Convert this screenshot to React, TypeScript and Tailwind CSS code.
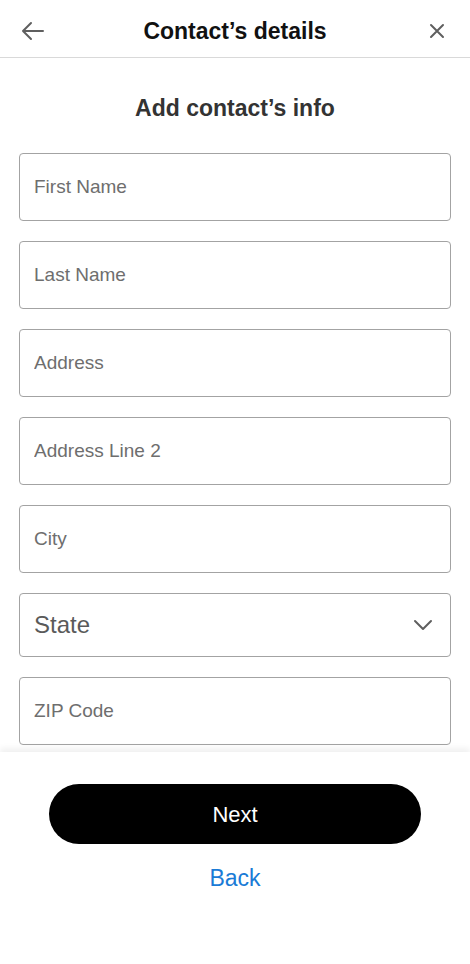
import { useState } from 'react'

const fields = ['First Name', 'Last Name', 'Address', 'Address Line 2', 'City']

function ArrowLeft() {
  return (
    <svg width="24" height="24" viewBox="0 0 24 24" fill="none" stroke="#5f5f5f" strokeWidth="2" strokeLinecap="round" strokeLinejoin="round">
      <path d="M22 12H2M10 4l-8 8 8 8" />
    </svg>
  )
}

function Close() {
  return (
    <svg width="16" height="16" viewBox="0 0 16 16" fill="none" stroke="#5f5f5f" strokeWidth="2" strokeLinecap="round">
      <path d="M2 2l12 12M14 2L2 14" />
    </svg>
  )
}

function Chevron() {
  return (
    <svg width="20" height="12" viewBox="0 0 20 12" fill="none" stroke="#5f5f5f" strokeWidth="2" strokeLinecap="round" strokeLinejoin="round">
      <path d="M2 2l8 8 8-8" />
    </svg>
  )
}

export default function App() {
  const [values, setValues] = useState<Record<string, string>>({})

  return (
    <div className="flex h-[964px] w-full flex-col overflow-hidden bg-white font-['Liberation_Sans',Arial,sans-serif]">
      <header className="flex h-[58px] shrink-0 items-center justify-between border-b border-[#d9d9d9] px-[21px] pt-[5px]">
        <button className="flex h-6 w-6 items-center justify-center">
          <ArrowLeft />
        </button>
        <h1 className="text-[23px] font-bold text-[#111]">Contact’s details</h1>
        <button className="flex h-6 w-6 items-center justify-center">
          <Close />
        </button>
      </header>

      <main className="flex-1 overflow-hidden px-[19px]">
        <h2 className="pt-[36px] pb-[31px] text-center text-[23px] font-bold leading-[28px] text-[#333]">
          Add contact’s info
        </h2>
        <div className="flex flex-col gap-5">
          {fields.map((f) => (
            <input
              key={f}
              placeholder={f}
              value={values[f] ?? ''}
              onChange={(e) => setValues({ ...values, [f]: e.target.value })}
              className="h-[68px] w-full rounded-[4px] border border-[#a3a3a3] px-[14px] text-[19px] text-[#333] outline-none placeholder:text-[#6e6e6e]"
            />
          ))}
          <button className="flex h-[64px] w-full items-center justify-between rounded-[4px] border border-[#a3a3a3] pr-[17px] pl-[14px]">
            <span className="text-[24px] text-[#5a5a5a]">State</span>
            <Chevron />
          </button>
          <input
            placeholder="ZIP Code"
            className="h-[68px] w-full rounded-[4px] border border-[#a3a3a3] px-[14px] text-[19px] text-[#333] outline-none placeholder:text-[#6e6e6e]"
          />
        </div>
      </main>

      <footer className="relative h-[212px] shrink-0 bg-white shadow-[0_-4px_6px_rgba(0,0,0,0.06)]">
        <div className="flex flex-col items-center pt-[32px]">
          <button className="h-[60px] w-[372px] rounded-full bg-black text-[22px] text-white">Next</button>
          <button className="mt-[17px] text-[23px] text-[#1a7bd6]">Back</button>
        </div>
      </footer>
    </div>
  )
}
